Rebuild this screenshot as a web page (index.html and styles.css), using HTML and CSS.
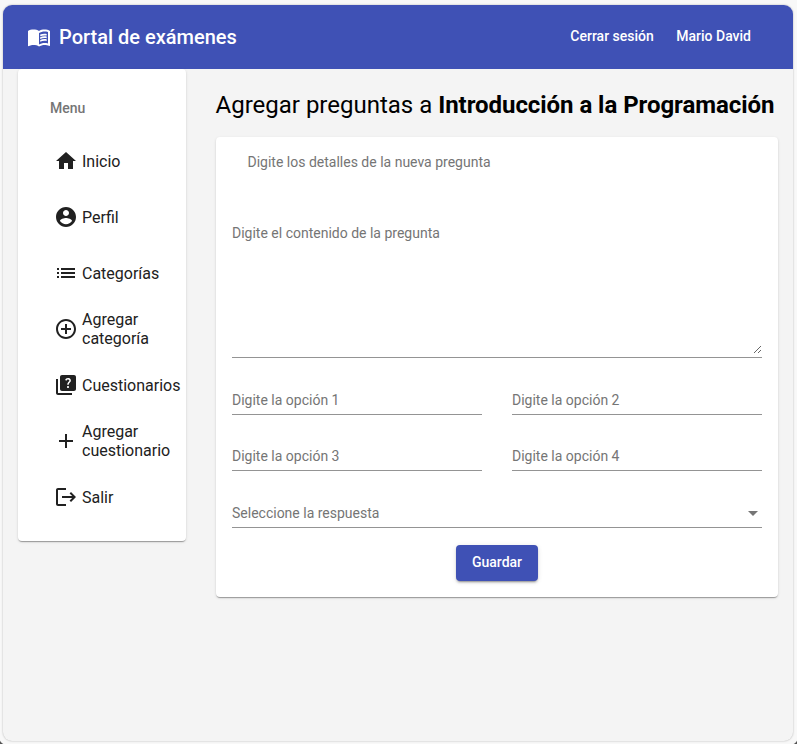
FILE: index.html
```html
<!DOCTYPE html>
<html lang="es">
<head>
<meta charset="utf-8">
<title>Portal de exámenes</title>
<link rel="stylesheet" href="styles.css">
</head>
<body>
<div class="window">
  <header class="toolbar">
    <svg class="icon" viewBox="0 0 24 24"><path fill-rule="evenodd" d="M17.5 4.5c-1.95 0-4.05.4-5.5 1.5-1.45-1.1-3.55-1.5-5.5-1.5S2.45 4.9 1 6v14.65c0 .65.73.45.75.45C3.1 20.45 5.05 20 6.5 20c1.95 0 4.05.4 5.5 1.5 1.35-.85 3.8-1.5 5.5-1.5 1.65 0 3.35.3 4.75 1.05.41.21.75-.19.75-.45V6c-1.49-1.12-3.63-1.5-5.5-1.5zm3.5 14c-1.1-.35-2.3-.5-3.5-.5-1.7 0-4.15.65-5.5 1.5V8c1.35-.85 3.8-1.5 5.5-1.5 1.2 0 2.4.15 3.5.5v11.500z"/><path d="M13.200 9.600c1.800-.9 4.300-1.200 6.500-.7v1.700c-2.100-.45-4.600-.2-6.500.75zm0 2.700c1.800-.9 4.300-1.200 6.500-.7v1.700c-2.100-.45-4.600-.2-6.500.75zm0 2.700c1.800-.9 4.300-1.200 6.500-.7v1.700c-2.100-.45-4.600-.2-6.500.75z"/></svg>
    <span class="brand">Portal de exámenes</span>
    <nav class="links"><a>Cerrar sesión</a><a>Mario David</a></nav>
  </header>
  <div class="content">
    <aside class="card menu">
      <h3>Menu</h3>
      <a class="item"><svg class="icon" viewBox="0 0 24 24"><path d="M10 20v-6h4v6h5v-8h3L12 3 2 12h3v8z"/></svg><span>Inicio</span></a>
      <a class="item"><svg class="icon" viewBox="0 0 24 24"><path d="M12 2C6.480 2 2 6.480 2 12s4.480 10 10 10 10-4.480 10-10S17.520 2 12 2zm0 3c1.660 0 3 1.340 3 3s-1.340 3-3 3-3-1.340-3-3 1.340-3 3-3zm0 14.200c-2.500 0-4.710-1.280-6-3.220.03-1.990 4-3.080 6-3.080 1.990 0 5.970 1.090 6 3.080-1.290 1.940-3.500 3.220-6 3.220z"/></svg><span>Perfil</span></a>
      <a class="item"><svg class="icon" viewBox="0 0 24 24"><path d="M3 13h2v-2H3zm0 4h2v-2H3zm0-8h2V7H3zm4 4h14v-2H7zm0 4h14v-2H7zM7 7v2h14V7z"/></svg><span>Categorías</span></a>
      <a class="item"><svg class="icon" viewBox="0 0 24 24"><path d="M13 7h-2v4H7v2h4v4h2v-4h4v-2h-4V7zm-1-5C6.480 2 2 6.480 2 12s4.480 10 10 10 10-4.480 10-10S17.520 2 12 2zm0 18c-4.410 0-8-3.590-8-8s3.590-8 8-8 8 3.590 8 8-3.590 8-8 8z"/></svg><span>Agregar categoría</span></a>
      <a class="item"><svg class="icon" viewBox="0 0 24 24"><path d="M4 6H2v14c0 1.100.9 2 2 2h14v-2H4V6z"/><path d="M20 2H8c-1.100 0-2 .9-2 2v12c0 1.100.9 2 2 2h12c1.100 0 2-.9 2-2V4c0-1.100-.9-2-2-2zm-5.990 13c-.59 0-1.050-.47-1.050-1.050 0-.59.47-1.040 1.050-1.040.59 0 1.040.45 1.040 1.040-.01.58-.45 1.050-1.040 1.050zm2.500-6.170c-.63.93-1.230 1.210-1.560 1.810-.13.24-.18.4-.18 1.180h-1.520c0-.41-.06-1.080.26-1.650.41-.73 1.180-1.160 1.630-1.800.48-.68.210-1.940-1.140-1.940-.88 0-1.320.67-1.500 1.230l-1.370-.57C11.510 5.960 12.520 5 13.990 5c1.230 0 2.080.56 2.510 1.260.37.6.58 1.730.01 2.570z"/></svg><span>Cuestionarios</span></a>
      <a class="item"><svg class="icon" viewBox="0 0 24 24"><path d="M19 13h-6v6h-2v-6H5v-2h6V5h2v6h6z"/></svg><span>Agregar cuestionario</span></a>
      <a class="item"><svg class="icon" viewBox="0 0 24 24"><path d="M4 5h8V3H4c-1.100 0-2 .9-2 2v14c0 1.100.9 2 2 2h8v-2H4z"/><path d="m17 7-1.410 1.410L18.170 11H8v2h10.170l-2.580 2.580L17 17l5-5z"/></svg><span>Salir</span></a>
    </aside>
    <main>
      <h1>Agregar preguntas a <b>Introducción a la Programación</b></h1>
      <form class="card form">
        <p class="subtitle">Digite los detalles de la nueva pregunta</p>
        <div class="area"><textarea class="control" placeholder="Digite el contenido de la pregunta"></textarea></div>
        <div class="options">
          <input class="control" placeholder="Digite la opción 1">
          <input class="control" placeholder="Digite la opción 2">
          <input class="control" placeholder="Digite la opción 3">
          <input class="control" placeholder="Digite la opción 4">
        </div>
        <div class="control select"><span>Seleccione la respuesta</span><i class="arrow"></i></div>
        <button class="save" type="button">Guardar</button>
      </form>
    </main>
  </div>
</div>
</body>
</html>
```
FILE: styles.css
```css
* { box-sizing: border-box; }
body {
  margin: 0;
  padding: 5px 4px 3px 3px;
  height: 744px;
  overflow: hidden;
  background:
    radial-gradient(circle at 100% 0, transparent 6px, #555 7px) left bottom / 6px 6px no-repeat,
    radial-gradient(circle at 0 0, transparent 6px, #555 7px) right bottom / 6px 6px no-repeat,
    #f8f8f8;
  font-family: Roboto, "Liberation Sans", sans-serif;
  color: #212121;
}
.window {
  height: 736px;
  border-radius: 9px;
  background: #f4f4f4;
  overflow: hidden;
  box-shadow: 0 0 2px rgba(0, 0, 0, .3);
}
.icon { width: 24px; height: 24px; flex: none; fill: currentColor; }
.toolbar {
  height: 64px;
  padding: 0 42px 0 24px;
  display: flex;
  align-items: center;
  background: #3f51b5;
  color: #fff;
}
.brand { margin-left: 8px; font-size: 20px; font-weight: 500; }
.links { display: flex; gap: 22.5px; margin: -2px 0 0 auto; font-size: 14px; font-weight: 500; }
.content { display: flex; align-items: flex-start; gap: 30px; padding: 0 15px; }
.card {
  background: #fff;
  border-radius: 4px;
  box-shadow: 0 2px 1px -1px rgba(0, 0, 0, .2), 0 1px 1px rgba(0, 0, 0, .14), 0 1px 3px rgba(0, 0, 0, .12);
}
.menu { width: 168px; height: 472px; padding: 16px 0 0; }
.menu h3 {
  margin: 0;
  height: 48px;
  padding-left: 32px;
  font-size: 14px;
  font-weight: 500;
  line-height: 46px;
  color: #757575;
}
.item {
  height: 56px;
  padding-left: 36px;
  display: flex;
  align-items: center;
  gap: 4px;
  font-size: 16px;
  line-height: 19px;
}
main { width: 562px; }
h1 {
  margin: 0 0 0 -.5px;
  height: 68px;
  font-size: 24px;
  font-weight: 400;
  line-height: 72px;
  white-space: nowrap;
  color: #000;
}
h1 b { font-weight: 700; letter-spacing: -.05px; }
.form { height: 460px; padding: 16px; }
.subtitle { margin: 0 0 52px; padding-left: 15.5px; font-size: 14px; line-height: 18px; color: #757575; }
.control {
  display: block;
  width: 100%;
  margin: 0;
  padding: 0 0 5px;
  border: 0;
  border-bottom: 1px solid #949494;
  border-radius: 0;
  outline: 0;
  background: transparent;
  font: 14px/18px Roboto, "Liberation Sans", sans-serif;
  color: #757575;
}
.control::placeholder { color: #757575; opacity: 1; }
.area { height: 135px; border-bottom: 1px solid #949494; }
.area .control { height: 131px; padding: 1px 0 0; border: 0; resize: vertical; }
.options {
  display: grid;
  grid-template-columns: 1fr 1fr;
  gap: 32px 30px;
  padding: 33px 0;
}
.options .control { height: 24px; }
.select { height: 24px; display: flex; justify-content: space-between; }
.arrow {
  margin: 7px 4px 0 0;
  height: 5px;
  border: 5px solid transparent;
  border-top-color: #757575;
  border-bottom: 0;
}
.save {
  display: block;
  width: 82px;
  height: 36px;
  margin: 17px auto 0;
  padding: 0 0 2px;
  border: 0;
  border-radius: 4px;
  background: #3f51b5;
  color: #fff;
  font: 500 14px Roboto, "Liberation Sans", sans-serif;
  box-shadow: 0 3px 1px -2px rgba(0, 0, 0, .2), 0 2px 2px rgba(0, 0, 0, .14), 0 1px 5px rgba(0, 0, 0, .12);
}
```
